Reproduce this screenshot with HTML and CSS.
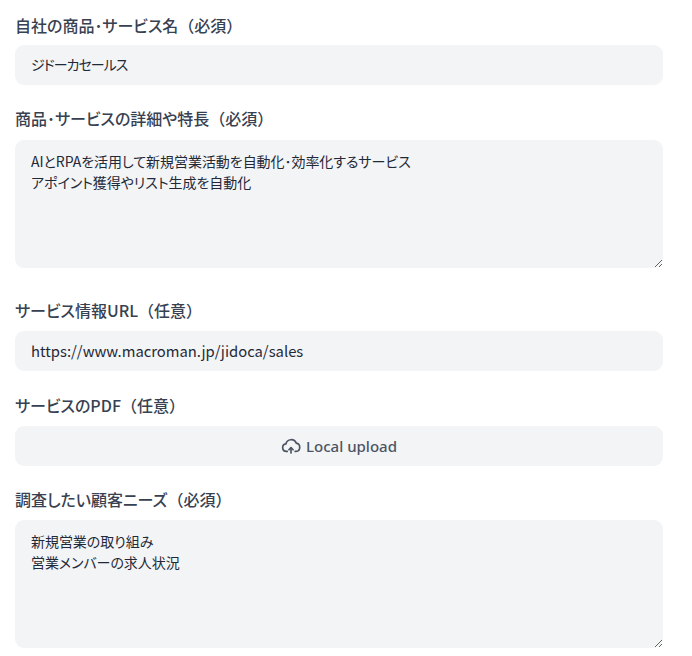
FILE: index.html
```html
<!DOCTYPE html>
<html lang="ja">
<head>
<meta charset="utf-8">
<title>Form</title>
<link rel="stylesheet" href="styles.css">
</head>
<body>
<form class="form">
  <div class="field field-first">
    <label class="label">自社の商品･サービス名<span class="paren">（必須）</span></label>
    <input class="control input kana" value="ジドーカセールス">
  </div>
  <div class="field field-area">
    <label class="label">商品･サービスの詳細や特長<span class="paren">（必須）</span></label>
    <textarea class="control area">AIとRPAを活用して新規営業活動を自動化･効率化するサービス
アポイント獲得やリスト生成を自動化</textarea>
  </div>
  <div class="field">
    <label class="label">サービス情報URL<span class="paren">（任意）</span></label>
    <input class="control input url" value="https://www.macroman.jp/jidoca/sales">
  </div>
  <div class="field field-tight">
    <label class="label">サービスのPDF<span class="paren">（任意）</span></label>
    <button type="button" class="upload">
      <svg class="icon" viewBox="0 0 24 24" fill="none" stroke="currentColor" stroke-width="2" stroke-linecap="round" stroke-linejoin="round"><path d="M7.5 18.5H6.5a4.5 4.5 0 0 1-.6-8.96A6.5 6.5 0 0 1 18.3 8.6a5 5 0 0 1-.3 9.9h-1"/><path d="M12 20.5v-6"/><path d="M9.5 16.5 12 14l2.5 2.5"/></svg>
      <span>Local upload</span>
    </button>
  </div>
  <div class="field">
    <label class="label">調査したい顧客ニーズ<span class="paren">（必須）</span></label>
    <textarea class="control area">新規営業の取り組み
営業メンバーの求人状況</textarea>
  </div>
</form>
</body>
</html>
```

FILE: styles.css
```css
html, body {
  margin: 0;
  padding: 0;
  background: #fff;
}
body {
  font-family: "Noto Sans CJK JP", "Noto Sans", sans-serif;
  color: #374151;
}
.form {
  display: flex;
  flex-direction: column;
  padding: 14px 29px 0 15px;
}
.field {
  display: flex;
  flex-direction: column;
  margin-bottom: 23px;
}
.field-first {
  margin-bottom: 22px;
}
.field-area {
  margin-bottom: 31px;
}
.field-tight {
  margin-bottom: 22px;
}
.label {
  display: block;
  height: 22px;
  line-height: 22px;
  margin-bottom: 10px;
  font-size: 16px;
  font-weight: 500;
  font-feature-settings: "palt";
  color: #374151;
}
.paren {
  font-feature-settings: normal;
}
.field-first .label {
  margin-bottom: 9px;
}
.field-area .label {
  margin-bottom: 11px;
}
.control {
  display: block;
  width: 100%;
  box-sizing: border-box;
  border: 0;
  outline: 0;
  margin: 0;
  background: #f3f4f6;
  border-radius: 9px;
  font-family: "Noto Sans CJK JP", "Noto Sans", sans-serif;
  font-size: 14px;
  font-feature-settings: "palt";
  color: #1f2937;
}
.input {
  height: 40px;
  padding: 0 16px 2px;
}
.kana {
  letter-spacing: -1px;
}
.url {
  font-size: 14.8px;
}
.area {
  height: 128px;
  padding: 11px 16px;
  line-height: 21px;
  letter-spacing: -0.05px;
  resize: vertical;
}
.upload {
  display: flex;
  align-items: center;
  justify-content: center;
  gap: 5px;
  width: 100%;
  height: 40px;
  border: 0;
  padding: 0;
  background: #f3f4f6;
  border-radius: 9px;
  font-family: "Noto Sans", sans-serif;
  font-size: 15px;
  font-weight: 500;
  color: #4b5563;
}
.icon {
  width: 20px;
  height: 20px;
}
```
